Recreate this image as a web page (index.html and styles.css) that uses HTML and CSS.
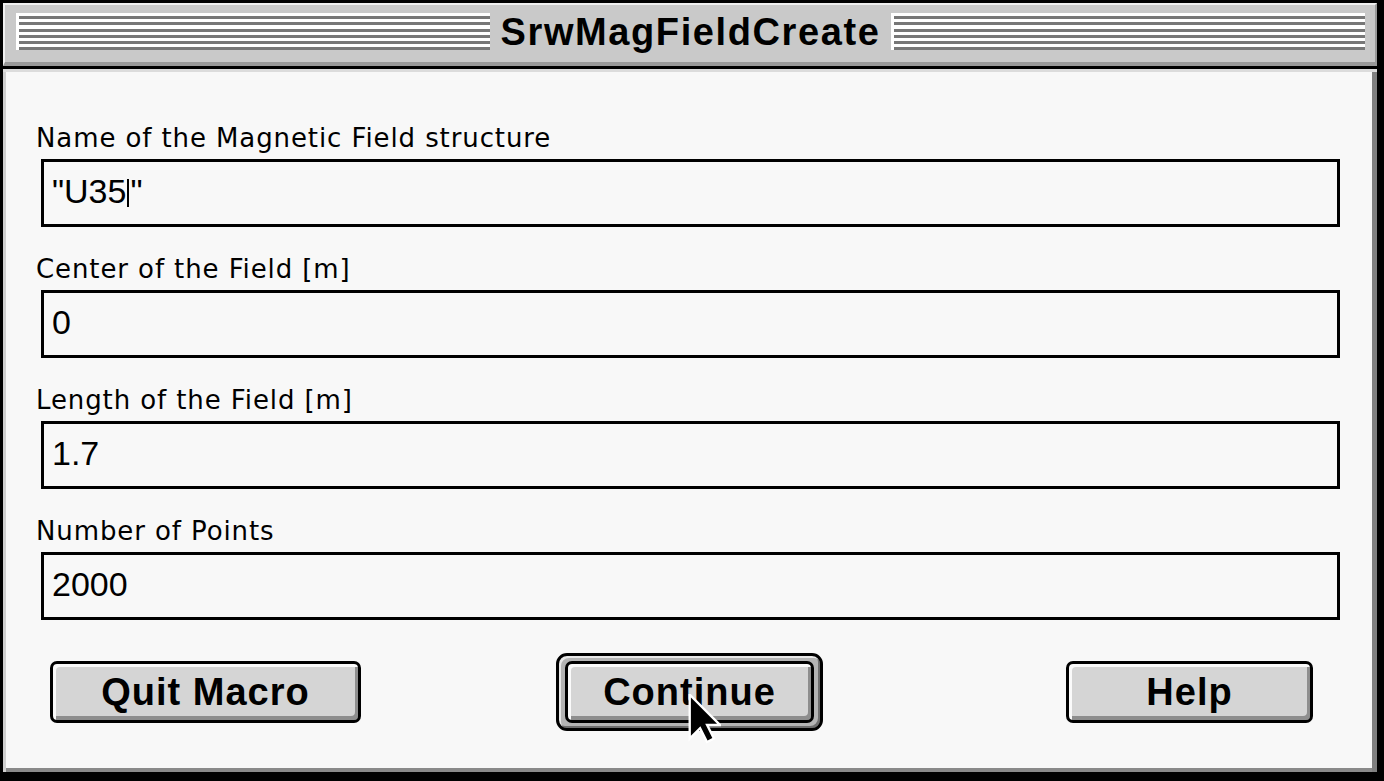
FILE: index.html
```html
<!DOCTYPE html>
<html>
<head>
<meta charset="utf-8">
<title>SrwMagFieldCreate</title>
<link rel="stylesheet" href="styles.css">
</head>
<body>
<div class="window">
  <div class="titlebar">
    <div class="stripes"></div>
    <div class="title">SrwMagFieldCreate</div>
    <div class="stripes"></div>
  </div>
  <div class="content">
    <div class="group">
      <div class="label">Name of the Magnetic Field structure</div>
      <div class="field">"U35<span class="caret"></span>"</div>
    </div>
    <div class="group">
      <div class="label">Center of the Field [m]</div>
      <div class="field">0</div>
    </div>
    <div class="group">
      <div class="label">Length of the Field [m]</div>
      <div class="field">1.7</div>
    </div>
    <div class="group">
      <div class="label">Number of Points</div>
      <div class="field">2000</div>
    </div>
    <div class="buttons">
      <div class="btn btn-quit">Quit Macro</div>
      <div class="default-ring"><div class="btn btn-continue">Continue</div></div>
      <div class="btn btn-help">Help</div>
    </div>
  </div>
  <svg class="pointer" width="34" height="50" viewBox="-1.5 -1.5 14 21" xmlns="http://www.w3.org/2000/svg">
    <path d="M0 0 L0 16 L4 12 L7 18 L9 17 L6 11 L11 11 Z" fill="#000" stroke="#fff" stroke-width="2" stroke-linejoin="miter" paint-order="stroke"/>
  </svg>
</div>
</body>
</html>
```

FILE: styles.css
```css
html, body {
  margin: 0;
  padding: 0;
  background: #000;
}

body {
  width: 1384px;
  height: 781px;
  overflow: hidden;
}

.window {
  position: relative;
  margin: 3px 7px 9px 3px;
  width: 1374px;
  height: 769px;
  display: flex;
  flex-direction: column;
}

.titlebar {
  box-sizing: border-box;
  height: 63px;
  flex: 0 0 63px;
  background: #c9c9c9;
  border-top: 2px solid #efefef;
  border-left: 2px solid #efefef;
  border-right: 2px solid #9a9a9a;
  border-bottom: 4px solid #999;
  padding: 0 10px 0 11px;
  display: flex;
  align-items: flex-start;
}

.stripes {
  flex: 1;
  margin-top: 8px;
  height: 37px;
  border-left: 3px solid #fff;
  background: repeating-linear-gradient(to bottom, #fff 0 3.2px, #777 3.2px 6.2px);
}

.title {
  margin-top: 8px;
  padding: 0 11px 0 11px;
  font-family: "Liberation Sans", Arial, sans-serif;
  font-weight: bold;
  font-size: 38px;
  line-height: 38px;
  letter-spacing: 1.6px;
  color: #000;
  white-space: nowrap;
}

.content {
  flex: 1;
  background: #f8f8f8;
  border-top: 3px solid #000;
  box-shadow: inset 0 3px 0 #dcdcdc, inset 3px 0 0 #cfcfcf, inset -5px 0 0 #808080, inset 0 -4px 0 #8a8a8a;
  padding: 54px 37px 0 33px;
}

.group {
  margin-bottom: 27px;
}

.label {
  font-family: "DejaVu Sans", Verdana, sans-serif;
  font-size: 26px;
  line-height: 30px;
  letter-spacing: 0.9px;
  color: #000;
  margin-bottom: 6px;
  white-space: nowrap;
}

.field {
  box-sizing: border-box;
  margin-left: 5px;
  height: 68px;
  border: 3px solid #000;
  padding: 0 8px 4px 8px;
  font-family: "Liberation Sans", Arial, sans-serif;
  font-size: 34px;
  line-height: 58px;
  color: #000;
  white-space: nowrap;
}

.caret {
  display: inline-block;
  width: 2px;
  height: 28px;
  background: #000;
  vertical-align: -4px;
  margin: 0 1px;
}

.buttons {
  margin-top: 33px;
  display: flex;
  align-items: center;
  height: 78px;
}

.btn {
  box-sizing: border-box;
  height: 62px;
  border: 3px solid #000;
  border-radius: 7px;
  background: #d5d5d5;
  box-shadow: inset 3px 3px 0 #fafafa, inset -3px -4px 0 #8e8e8e;
  font-family: "Liberation Sans", Arial, sans-serif;
  font-weight: bold;
  font-size: 38px;
  line-height: 56px;
  letter-spacing: 1px;
  text-align: center;
  color: #000;
  white-space: nowrap;
}

.btn-quit {
  margin-left: 14px;
  width: 311px;
}

.default-ring {
  box-sizing: border-box;
  margin-left: 195px;
  width: 267px;
  height: 78px;
  border: 3px solid #000;
  border-radius: 11px;
  padding: 5px 6px;
  background: #b4b4b4;
  box-shadow: inset 2px 2px 0 #e8e8e8, inset -2px -2px 0 #6e6e6e;
}

.btn-continue {
  width: 100%;
}

.btn-help {
  margin-left: 243px;
  width: 247px;
}

.pointer {
  position: absolute;
  left: 684px;
  top: 691px;
}
```
